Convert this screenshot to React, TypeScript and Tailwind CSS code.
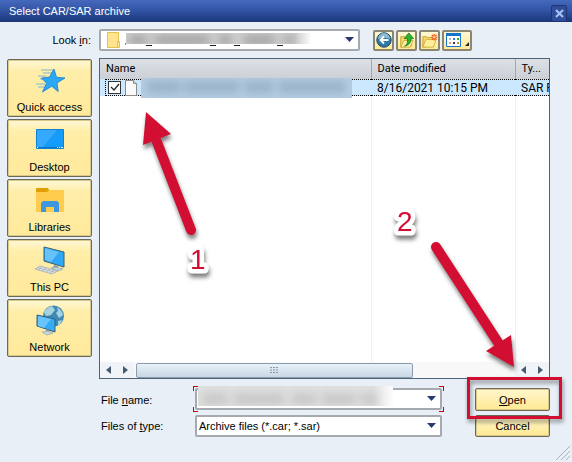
import type { ReactNode } from 'react';

const places = [
  { id: 'quick', label: 'Quick access', icon: <StarIcon /> },
  { id: 'desktop', label: 'Desktop', icon: <DesktopIcon /> },
  { id: 'libraries', label: 'Libraries', icon: <LibrariesIcon /> },
  { id: 'pc', label: 'This PC', icon: <PcIcon /> },
  { id: 'network', label: 'Network', icon: <NetworkIcon /> },
];

const toolButton =
  'flex h-[21px] items-center justify-center rounded-xs border-2 border-[#8a8672] bg-linear-to-b from-[#fff8d5] to-[#ffe993]';
const yellowButton =
  'flex w-full items-center justify-center rounded-xs border border-[#6b6856] bg-linear-to-b from-[#fff7cf] to-[#ffe88f] shadow-[inset_0_0_0_1px_#d8c98a]';

function StarIcon() {
  return (
    <svg width="32" height="32" viewBox="0 0 32 32" fill="none">
      <path d="M7 6h12M9 9h9M4 12h8M6 15h8M4 23h8M2 20h9" stroke="#5aa9dc" strokeWidth=".8" />
      <path d="M20 5l2.500 8.200 8.500.800-8 5 1.200 8.500-6.500-5.300L8.500 28l4-8.800L7.500 14l8-1z" fill="#2ca7f5" stroke="#1380cc" strokeWidth=".8" />
    </svg>
  );
}

function DesktopIcon() {
  return (
    <svg width="32" height="32" viewBox="0 0 32 32">
      <path d="M2.500 5.500h27v19h-27z" fill="#159bfa" stroke="#1280d0" />
      <path d="M3 6h20L9 23H3z" fill="#35a9fb" />
      <path d="M3 23.500h26" stroke="#0875cc" />
      <path d="M3 23.500h1m19 0h1m1 0h1m1 0h2" stroke="#fff" />
    </svg>
  );
}

function LibrariesIcon() {
  return (
    <svg width="32" height="32" viewBox="0 0 32 32">
      <path d="M2 5h12l2 1h14v22H2z" fill="#ffcb4d" />
      <path d="M2 5q0-1 1-1h11l1 2-2 2H2z" fill="#dfa006" />
      <path d="M7 28V19l2-2h14l2 2v9h-5v-5h-8v5z" fill="#3d97de" />
    </svg>
  );
}

function PcIcon() {
  return (
    <svg width="32" height="32" viewBox="0 0 32 32">
      <path d="M10 3l20 5v15l-20-6z" fill="#2fa7f2" stroke="#365f7c" />
      <path d="M11 4l14 4-8 10-6-2z" fill="#67c2fa" />
      <path d="M20 21l4 1v3l-5-1z" fill="#849ca8" />
      <path d="M17 24l5-1 7 2-5 2z" fill="#c7d4da" stroke="#8499a5" strokeWidth=".6" />
      <path d="M6 22l18 5-6 3L1 25z" fill="#dce2e6" stroke="#9ba5ac" strokeWidth=".7" />
      <path d="M4 24l17 4M8 23l-4 3m8-2l-4 3m8-2l-4 3m8-2l-4 3" stroke="#a4adb4" strokeWidth=".7" />
    </svg>
  );
}

function NetworkIcon() {
  return (
    <svg width="32" height="32" viewBox="0 0 32 32">
      <circle cx="19.500" cy="12" r="10.500" fill="#3f8ab5" />
      <path d="M10 8q3-5 8-6l3 4-4 5-5 1zM23 3q5 3 6 8l-4 3-3-5 2-2zM24 17l4-1q-1 4-4 6z" fill="#a6d2df" />
      <path d="M3 11l18 4v13L3 22z" fill="#35aaf5" stroke="#365f7c" />
      <path d="M4 12l13 3-7 9-6-2z" fill="#69c4fb" />
      <path d="M12 25l3 1v3l-3-1z" fill="#8096a2" />
      <path d="M8 28l6-1 5 2-6 2z" fill="#c9d6dc" stroke="#8499a5" strokeWidth=".6" />
    </svg>
  );
}

function BackIcon() {
  return (
    <svg className="shrink-0" width="16" height="16" viewBox="0 0 16 16">
      <circle cx="8" cy="8" r="7.200" fill="#2f78a8" stroke="#17486b" />
      <path d="M2 7a6 6 0 0 1 12 0q-6-3-12 0" fill="#8dbad2" />
      <path d="M12.500 8H4.500M8 4.500L4.500 8 8 11.500" stroke="#fff" strokeWidth="1.900" fill="none" />
    </svg>
  );
}

function UpIcon() {
  return (
    <svg className="shrink-0" width="17" height="17" viewBox="0 0 18 18">
      <path d="M3 5h4l1 1h6v9l-11 1z" fill="#f8dc6b" stroke="#c29c2d" />
      <path d="M3 16l3-7h10l-3 7z" fill="#ffef9c" stroke="#d2ae3d" />
      <path d="M7 15q4-2 3-8H6.500L11.500 1 16.500 7h-3q1 6-6.500 8z" fill="#27b52a" stroke="#14731b" strokeWidth=".8" />
    </svg>
  );
}

function NewFolderIcon() {
  return (
    <svg className="shrink-0" width="17" height="17" viewBox="0 0 18 18">
      <path d="M2 5h4l1 1h6v9l-11 1z" fill="#f8dc6b" stroke="#c29c2d" />
      <path d="M2 16l3-8h11l-3 8z" fill="#ffef9c" stroke="#d2ae3d" />
      <path d="M14 2v7M10.500 5.500h7M11.500 3l5 5M16.500 3l-5 5" stroke="#f0521e" strokeWidth="1.200" />
      <circle cx="14" cy="5.500" r="1.300" fill="#ffd887" />
    </svg>
  );
}

function ViewIcon() {
  return (
    <svg className="shrink-0" width="15" height="14" viewBox="0 0 15 14">
      <path d="M.5.5h14v13H.5z" fill="#fff" stroke="#1673d0" />
      <path d="M0 0h15v3H0z" fill="#1673d0" />
      <path d="M3 5h2v2H3z" fill="#a9b6c8" />
      <path d="M7 5h2v2H7z" fill="#3478e8" />
      <path d="M11 5h2v2h-2z" fill="#29a33a" />
      <path d="M3 9h2v2H3z" fill="#e79a86" />
      <path d="M7 9h2v2H7z" fill="#3c3550" />
      <path d="M11 9h2v2h-2z" fill="#d28a24" />
    </svg>
  );
}

function DropArrow() {
  return (
    <svg className="pointer-events-none absolute top-2 right-1.5" width="9" height="5" viewBox="0 0 9 5">
      <path d="M0 0h9L4.500 5z" fill="#28396d" />
    </svg>
  );
}

function SelectBox({ id, value, children }: { id: string; value: string; children?: ReactNode }) {
  return (
    <div className="relative w-full">
      <select
        id={id}
        className="block h-[22px] w-full appearance-none rounded-xs border-2 border-[#a6aaae] bg-white pl-0.5 text-black outline-none"
      >
        <option>{value}</option>
      </select>
      {children}
      <DropArrow />
    </div>
  );
}

function ScrollArrow({ left }: { left?: boolean }) {
  return (
    <button aria-label={left ? 'Scroll left' : 'Scroll right'} className="flex h-4 w-[17px] shrink-0 items-center justify-center bg-[#f0f4f8]">
      <svg width="5" height="8" viewBox="0 0 5 8" fill="#465a70">
        {left ? <path d="M5 0v8L0 4z" /> : <path d="M0 0v8l5-4z" />}
      </svg>
    </button>
  );
}

function Arrows() {
  return (
    <svg
      className="pointer-events-none absolute top-0 left-0 drop-shadow-[1px_4px_2px_rgba(0,0,0,0.5)]"
      width="572"
      height="462"
      viewBox="0 0 572 462"
      fill="#d20f33"
      stroke="#d20f33"
    >
      <path d="M191 230L157 142M436 247l65 100" strokeWidth="10" strokeLinecap="round" />
      <path d="M146 112l25 22-28 11zM514 367l-28-16 25-16z" stroke="none" />
      <g fontFamily="Liberation Sans, sans-serif" fontSize="28" strokeLinejoin="round">
        <g stroke="#fff" strokeWidth="9" paintOrder="stroke">
          <text x="190" y="269">1</text>
          <text x="397" y="231">2</text>
        </g>
      </g>
    </svg>
  );
}

export default function App() {
  return (
    <div className="relative min-h-screen overflow-hidden bg-[#e8eff6] font-['Liberation_Sans',sans-serif] text-[11px] leading-4 text-black">
      <header className="flex h-[22px] items-center justify-between bg-linear-to-b from-[#4669bd] via-[#3153a3] to-[#1b3678] pr-[5px] pl-[9px] text-white">
        <h1>Select CAR/SAR archive</h1>
        <button aria-label="Close" className="mt-1 flex h-[17px] w-4 items-center justify-center rounded-xs border border-[#1d3474] bg-[#2f4d98]">
          <svg width="9" height="9" viewBox="0 0 9 9">
            <path d="M1 1l7 7M8 1L1 8" stroke="#a5c2f4" strokeWidth="2.200" />
          </svg>
        </button>
      </header>

      <div className="flex items-center pt-[7px]">
        <label htmlFor="look-in" className="w-[99px] shrink-0 pr-2 text-right">
          Look <u>i</u>n:
        </label>
        <div className="max-w-[261px] flex-1">
          <SelectBox id="look-in" value="">
            <svg className="pointer-events-none absolute top-0.5 left-2" width="204" height="18" viewBox="0 0 204 18">
              <path d="M.5 1.500h11v15H.5z" fill="#ffe391" stroke="#e8c050" />
              <path d="M10.500 10.500h2v6h-2z" fill="#ffe391" stroke="#e8c050" />
              <defs>
                <filter id="soft" filterUnits="userSpaceOnUse" x="-10" y="-10" width="240" height="40">
                  <feGaussianBlur stdDeviation="4" />
                </filter>
                <linearGradient id="look-fade">
                  <stop offset="0" stopColor="#cfcfcf" />
                  <stop offset=".92" stopColor="#cccccc" />
                  <stop offset="1" stopColor="#fafafa" />
                </linearGradient>
                <linearGradient id="file-fade">
                  <stop offset="0" stopColor="#dedede" />
                  <stop offset=".9" stopColor="#e0e0e0" />
                  <stop offset="1" stopColor="#fdfdfd" />
                </linearGradient>
                <clipPath id="folder-clip">
                  <path d="M19 2h184v11H19z" />
                </clipPath>
              </defs>
              <g clipPath="url(#folder-clip)">
                <path d="M19 2h184v11H19z" fill="url(#look-fade)" />
                <path d="M22 9h18M48 9h54M112 9h12M137 9h30M178 9h8" stroke="#a6a6a6" strokeWidth="10" filter="url(#soft)" />
              </g>
              <path d="M18 13h1M39 14.500h6M103 14.500h6M127 14.500h6M170 14.500h6" stroke="#222" />
            </svg>
          </SelectBox>
        </div>
        <div className="ml-[13px] flex gap-0.5">
          <button aria-label="Back" className={`${toolButton} w-[21px]`}>
            <BackIcon />
          </button>
          <button aria-label="Up one level" className={`${toolButton} w-[21px]`}>
            <UpIcon />
          </button>
          <button aria-label="New folder" className={`${toolButton} w-[21px]`}>
            <NewFolderIcon />
          </button>
          <button aria-label="View menu" className={`${toolButton} w-[30px] gap-1`}>
            <ViewIcon />
            <svg className="mt-2 shrink-0" width="4" height="4" viewBox="0 0 4 4">
              <path d="M4 0v4H0z" fill="#222" />
            </svg>
          </button>
        </div>
      </div>

      <main className="flex gap-[7px] pt-[7px] pr-[22px] pl-[7px]">
        <nav className="mt-px flex w-[85px] shrink-0 flex-col gap-0.5">
          {places.map((place) => (
            <button
              key={place.id}
              className="flex h-[58px] flex-col items-center rounded-xs border border-[#6b6856] bg-linear-to-b from-[#fff8d8] via-[#ffeea9] via-20% to-[#ffe99b] pt-1 shadow-[inset_0_0_0_1px_#d8c98a]"
            >
              {place.icon}
              <span className="mt-[3px]">{place.label}</span>
            </button>
          ))}
        </nav>

        <div className="min-w-0 flex-1">
          <section className="overflow-hidden border border-[#4c6478] bg-white">
            <table className="w-full table-fixed font-[Roboto,'Liberation_Sans',sans-serif]">
              <colgroup>
                <col />
                <col className="w-[144px]" />
                <col className="w-[34px]" />
              </colgroup>
              <thead>
                <tr className="h-5 bg-linear-to-b from-[#dde1e6] to-[#cbd0d6] text-left">
                  <th className="border-r border-[#a2a8af] pl-1.5 font-normal">Name</th>
                  <th className="border-r border-[#a2a8af] pl-1.5 font-normal">Date modified</th>
                  <th className="pl-1.5 font-normal">Ty...</th>
                </tr>
              </thead>
              <tbody>
                <tr className="bg-[#cce8ff] text-xs">
                  <td>
                    <div className="ml-[5px] flex h-[17px] items-center gap-1 border-y border-l border-dotted border-black pl-0.5">
                      <span className="relative flex">
                        <input type="checkbox" aria-label="Select file" defaultChecked className="h-[13px] w-[13px] appearance-none border border-[#333] bg-white" />
                        <svg className="pointer-events-none absolute top-0.5 left-0.5" width="10" height="10" viewBox="0 0 10 10">
                          <path d="M1 4l3 3 5-6" stroke="#222" strokeWidth="1.200" fill="none" />
                        </svg>
                      </span>
                      <svg className="shrink-0" width="12" height="16" viewBox="0 0 12 16">
                        <path d="M.5.5h8l3 3v12H.5z" fill="#fafafa" stroke="#8c8c8c" />
                        <path d="M8.500.5v3h3" fill="#ddd" stroke="#8c8c8c" />
                      </svg>
                      <svg className="relative h-5 w-[211px] shrink-0" viewBox="0 0 211 20">
                        <path d="M0 0h211v20H0z" fill="#b5cce0" />
                        <path d="M6 9h34M44 9h54M104 9h28M138 9h66" stroke="#9ab3cb" strokeWidth="12" filter="url(#soft)" />
                      </svg>
                    </div>
                  </td>
                  <td>
                    <div className="flex h-[17px] items-center border-y border-dotted border-black pl-1.5">8/16/2021 10:15 PM</div>
                  </td>
                  <td>
                    <div className="flex h-[17px] items-center overflow-hidden border-y border-dotted border-black pl-1.5 whitespace-nowrap">SAR&nbsp;F</div>
                  </td>
                </tr>
                <tr className="h-[266px]">
                  <td className="border-r border-[#e9f2fa]" />
                  <td className="border-r border-[#e9f2fa]" />
                  <td />
                </tr>
              </tbody>
            </table>
            <div className="flex h-4 items-center bg-[#f8f8f8]">
              <ScrollArrow left />
              <ScrollArrow />
              <div className="flex flex-1 pl-0.5">
                <div className="flex h-[15px] w-[73%] items-center justify-center rounded-xs border border-[#8b9cad] bg-linear-to-b from-[#e8f1f8] to-[#c8d8e5]">
                  <svg width="8" height="6" viewBox="0 0 8 6">
                    <path d="M0 .5h8M0 3h8M0 5.500h8" stroke="#8799a9" strokeDasharray="2 1" />
                  </svg>
                </div>
              </div>
              <ScrollArrow left />
              <ScrollArrow />
            </div>
          </section>
        </div>
      </main>

      <form className="flex flex-col gap-1 pt-[9px] pr-[22px] pl-[101px]" onSubmit={(e) => e.preventDefault()}>
        <div className="flex items-start">
          <label htmlFor="file-name" className="w-[94px] shrink-0 self-center">
            File <u>n</u>ame:
          </label>
          <div className="relative min-w-0 flex-1">
            <SelectBox id="file-name" value="">
              <svg className="pointer-events-none absolute -top-0.5 left-[3px]" width="195" height="20" viewBox="0 0 195 20">
                <path d="M0 0h195v20H0z" fill="url(#file-fade)" />
                <path d="M5 13h24M36 13h50M94 13h24M124 13h34M163 13h16" stroke="#c8c8c8" strokeWidth="11" filter="url(#soft)" />
              </svg>
            </SelectBox>
            <span className="absolute -top-0.5 -left-0.5 h-[5px] w-[5px] border-t border-l border-[#d00000]" />
            <span className="absolute -bottom-0.5 -left-0.5 h-[5px] w-[5px] border-b border-l border-[#d00000]" />
            <span className="absolute -top-0.5 -right-0.5 h-[5px] w-[5px] border-t border-r border-[#d00000]" />
            <span className="absolute -right-0.5 -bottom-0.5 h-[5px] w-[5px] border-r border-b border-[#d00000]" />
          </div>
          <div className="relative ml-[33px] w-[75px] shrink-0">
            <button type="submit" className={`${yellowButton} h-[23px]`}>
              <span>
                <u>O</u>pen
              </span>
            </button>
            <span className="pointer-events-none absolute -top-[11px] -right-3 -bottom-2 -left-2 z-10 border-3 border-[#d20f33] drop-shadow-[1px_3px_2px_rgba(0,0,0,0.45)]" />
          </div>
        </div>
        <div className="flex items-center">
          <label htmlFor="file-type" className="w-[94px] shrink-0">
            Files of <u>t</u>ype:
          </label>
          <div className="min-w-0 flex-1">
            <SelectBox id="file-type" value="Archive files (*.car; *.sar)" />
          </div>
          <button type="button" className={`${yellowButton} ml-[33px] h-[22px] max-w-[75px]`}>
            Cancel
          </button>
        </div>
      </form>

      <svg className="absolute right-0.5 bottom-0.5" width="15" height="15" viewBox="0 0 15 15">
        <path d="M1 15L15 1M6 15l9-9M11 15l4-4" stroke="#a8b3be" />
      </svg>

      <Arrows />
    </div>
  );
}
